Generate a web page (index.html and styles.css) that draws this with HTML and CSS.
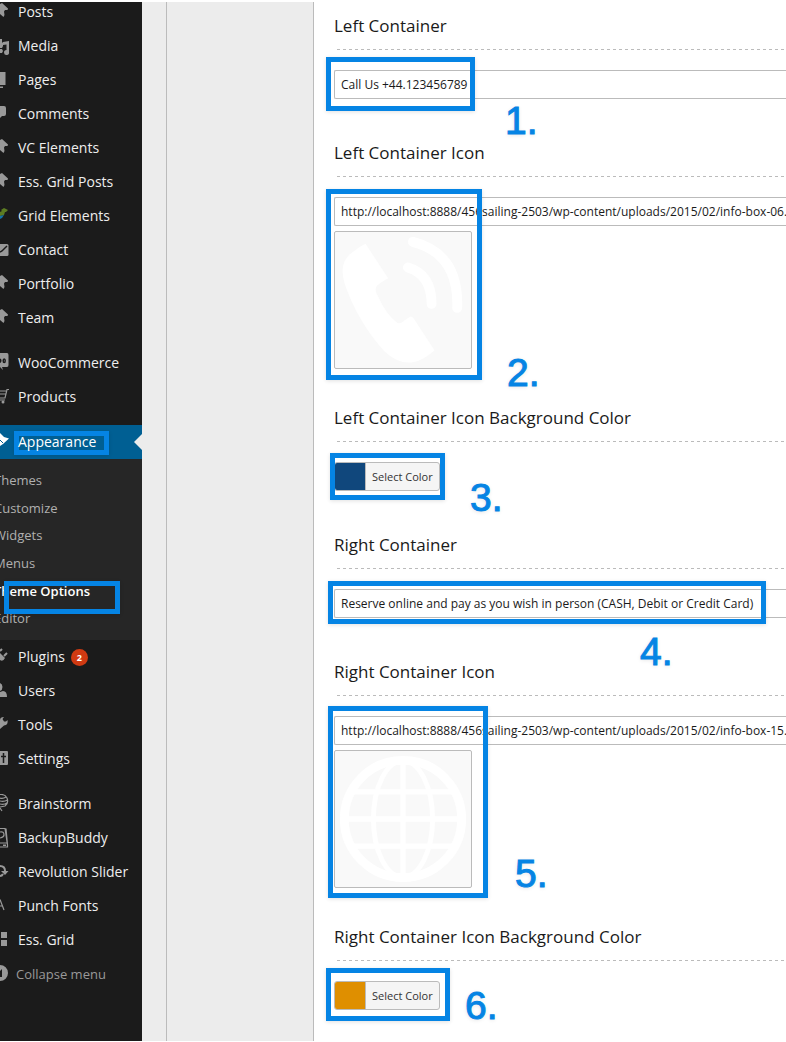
FILE: index.html
```html
<!DOCTYPE html>
<html lang="en">
<head>
<meta charset="utf-8">
<title>Theme Options</title>
<link rel="stylesheet" href="styles.css">
</head>
<body>
<div class="page">
  <nav class="sidebar" aria-label="Admin menu">
    <ul class="menu">
      <li><a href="#"><svg class="icon" viewBox="0 0 10 20"><path d="M0 2L2 1L8 6.500L7.500 8H5L4 9.500L4.500 13L3.500 15L0 12Z"/></svg>Posts</a></li>
      <li><a href="#"><svg class="icon" viewBox="0 0 10 20"><path d="M0 3H2V6L3 7V10L2 12H0ZM0 13H2L3 15L2 17H0ZM3 6L9 5V16A2.500 2.500 0 1 1 6.500 14V8.500L3 9Z"/></svg>Media</a></li>
      <li><a href="#"><svg class="icon" viewBox="0 0 10 20"><path d="M0 2H5.500V15H0ZM0 16.500H3V18H0Z"/></svg>Pages</a></li>
      <li><a href="#"><svg class="icon" viewBox="0 0 10 20"><path d="M0 2H4Q6 2 6 4V10Q6 12 4 12H2L0 14Z"/></svg>Comments</a></li>
      <li><a href="#"><svg class="icon" viewBox="0 0 10 20"><path d="M0 2L2 1L8 6.500L7.500 8H5L4 9.500L4.500 13L3.500 15L0 12Z"/></svg>VC Elements</a></li>
      <li><a href="#"><svg class="icon" viewBox="0 0 10 20"><path d="M0 2L2 1L8 6.500L7.500 8H5L4 9.500L4.500 13L3.500 15L0 12Z"/></svg>Ess. Grid Posts</a></li>
      <li><a href="#"><svg class="icon" viewBox="0 0 10 20"><path fill="#5d7c22" d="M1 4L4 2L8 4L6 6H5L4 9L0 10V6L2 5Z"/><path fill="#1474a8" d="M0 10L4 9L2 12L0 13Z"/></svg>Grid Elements</a></li>
      <li><a href="#"><svg class="icon" viewBox="0 0 10 20"><path d="M0 4H7Q8.500 4 8.500 5.500V14.500Q8.500 16 7 16H0Z"/><path class="cut" d="M0 12L2 11L7 6"/></svg>Contact</a></li>
      <li><a href="#"><svg class="icon" viewBox="0 0 10 20"><path d="M0 2L2 1L8 6.500L7.500 8H5L4 9.500L4.500 13L3.500 15L0 12Z"/></svg>Portfolio</a></li>
      <li><a href="#"><svg class="icon" viewBox="0 0 10 20"><path d="M0 2L2 1L8 6.500L7.500 8H5L4 9.500L4.500 13L3.500 15L0 12Z"/></svg>Team</a></li>
      <li class="group"><a href="#"><svg class="icon" viewBox="0 0 10 20"><path d="M0 0H7Q8.500 0 8.500 2V12Q8.500 14 7 14H2L3 17L0 14Z"/><path class="cut" d="M0 6Q1.500 7.500 0 9.500"/><ellipse class="cut" cx="4.200" cy="7.800" rx="1" ry="1.800"/></svg>WooCommerce</a></li>
      <li><a href="#"><svg class="icon" viewBox="0 0 10 20"><path class="line" d="M0 4H6M9 2.500H7L5 11H0M0 7H6M0 13H5"/><circle cx="3" cy="15" r="1.500"/></svg>Products</a></li>
      <li class="group current">
        <a href="#"><svg class="icon" viewBox="0 0 10 20"><path d="M0 1L4 5L9 6.500L3 12L0 14Z"/><path class="dent" d="M0 8L3 11"/></svg><span class="label">Appearance</span><span class="mark mark-appearance"></span></a>
        <ul class="submenu">
          <li><a href="#">Themes</a></li>
          <li><a href="#">Customize</a></li>
          <li><a href="#">Widgets</a></li>
          <li><a href="#">Menus</a></li>
          <li><a href="#" class="selected">Theme Options<span class="mark mark-options"></span></a></li>
          <li><a href="#">Editor</a></li>
        </ul>
      </li>
      <li><a href="#"><svg class="icon" viewBox="0 0 10 20"><path d="M0 6L5 11Q3 15 0 13Z"/><path class="thick" d="M0 4L2 2M4 9L7 6"/></svg>Plugins <span class="badge">2</span></a></li>
      <li><a href="#"><svg class="icon" viewBox="0 0 10 20"><path d="M0 2Q2.500 3 2.500 6Q2.500 9 0 10ZM0 11L3 10Q7 10 7 16H0Z"/></svg>Users</a></li>
      <li><a href="#"><svg class="icon" viewBox="0 0 10 20"><path d="M0 5Q0 2 4 2L2.500 4L4 6.500H6L7.500 5Q8.500 10 4 10.500L0 14Z"/></svg>Tools</a></li>
      <li><a href="#"><svg class="icon" viewBox="0 0 10 20"><path d="M0 2H7Q8 2 8 3V15Q8 16 7 16H0Z"/><path class="cut" d="M3.500 4V14M1 7.500H6"/></svg>Settings</a></li>
      <li class="group"><a href="#"><svg class="icon" viewBox="0 0 10 20"><path class="line" d="M0 .5Q5 0 7 4Q9 9 5 12L0 13M0 4Q3 5 6 3M0 7Q4 8 7.500 6M0 10Q4 11 7 9M0 14L2 17"/></svg>Brainstorm</a></li>
      <li><a href="#"><svg class="icon" viewBox="0 0 10 20"><path class="line" d="M0 .5H5L7.500 17V19H0M0 15H7M0 4Q4 3 4 7Q4 9 0 10M6 .5L7.500 17"/><path d="M3 16.500H6V18H3Z"/></svg>BackupBuddy</a></li>
      <li><a href="#"><svg class="icon" viewBox="0 0 10 20"><path class="thick" d="M0 4Q5 4 5 9M3 12Q2 14 0 14"/><path d="M1 9H8.500L5 13Z"/></svg>Revolution Slider</a></li>
      <li><a href="#"><svg class="icon" viewBox="0 0 10 20"><path class="line" d="M0 3.500L4 14M0 10H2"/></svg>Punch Fonts</a></li>
      <li><a href="#"><svg class="icon" viewBox="0 0 10 20"><path d="M1 2H7V8H1ZM1 10H7V16H1Z"/></svg>Ess. Grid</a></li>
      <li class="collapse"><a href="#"><svg class="icon" viewBox="0 0 10 20"><path d="M0 1A8 8 0 0 1 0 17V13L2 13V5L0 7Z"/></svg>Collapse menu</a></li>
    </ul>
  </nav>
  <div class="gutter"></div>
  <div class="tabs"></div>
  <main class="options">
    <section class="option">
      <h2><label for="left-text">Left Container</label></h2>
      <div class="field">
        <input class="text" id="left-text" type="text" value="Call Us +44.123456789">
        <span class="mark mark-1"></span><span class="step step-1">1.</span>
      </div>
    </section>
    <section class="option">
      <h2><label for="left-icon">Left Container Icon</label></h2>
      <div class="field">
        <input class="text" id="left-icon" type="text" value="http://localhost:8888/456sailing-2503/wp-content/uploads/2015/02/info-box-06.png">
        <div class="thumb">
          <svg viewBox="0 0 138 138" role="img" aria-label="Phone">
            <path fill="#fff" d="M31 12L54 47Q48 50 43 54Q39 58 44 66Q52 84 63 92Q66 94 70 90L76 86Q78 85 80 88L101 120Q90 130 80 132Q65 135 50 121Q23 91 10 53Q3 31 17 21Q24 15 31 12Z"/>
            <path class="wave" d="M74 36Q98 43 98 73M79 10Q126 22 124 77"/>
          </svg>
        </div>
        <span class="mark mark-2"></span><span class="step step-2">2.</span>
      </div>
    </section>
    <section class="option">
      <h2>Left Container Icon Background Color</h2>
      <div class="field">
        <button class="color" type="button"><span class="swatch swatch-blue"></span>Select Color</button>
        <span class="mark mark-3"></span><span class="step step-3">3.</span>
      </div>
    </section>
    <section class="option">
      <h2><label for="right-text">Right Container</label></h2>
      <div class="field">
        <input class="text" id="right-text" type="text" value="Reserve online and pay as you wish in person (CASH, Debit or Credit Card)">
        <span class="mark mark-4"></span><span class="step step-4">4.</span>
      </div>
    </section>
    <section class="option">
      <h2><label for="right-icon">Right Container Icon</label></h2>
      <div class="field">
        <input class="text" id="right-icon" type="text" value="http://localhost:8888/456sailing-2503/wp-content/uploads/2015/02/info-box-15.png">
        <div class="thumb">
          <svg viewBox="0 0 138 138" role="img" aria-label="Globe">
            <circle class="globe" cx="69" cy="69" r="59.500" stroke-width="9"/>
            <path class="globe" stroke-width="5.500" d="M69 8V130M8 69H130M16 41.500H122M16 96.500H122"/>
            <ellipse class="globe" cx="69" cy="69" rx="30" ry="59" stroke-width="5"/>
          </svg>
        </div>
        <span class="mark mark-5"></span><span class="step step-5">5.</span>
      </div>
    </section>
    <section class="option">
      <h2>Right Container Icon Background Color</h2>
      <div class="field">
        <button class="color" type="button"><span class="swatch swatch-orange"></span>Select Color</button>
        <span class="mark mark-6"></span><span class="step step-6">6.</span>
      </div>
    </section>
  </main>
</div>
</body>
</html>
```
FILE: styles.css
```css
* { box-sizing: border-box; }

body {
  margin: 0;
  background: #fff;
  font-family: "Open Sans", "Noto Sans", sans-serif;
  color: #1a1a1a;
}

.page {
  display: grid;
  grid-template-columns: 142px 24px 148px minmax(0, 1fr);
  min-height: 100vh;
  padding: 2px 0 1px;
  overflow: hidden;
}

ul { list-style: none; margin: 0; padding: 0; }
a { color: inherit; text-decoration: none; }

/* Admin menu */
.sidebar {
  background: #1b1b1b;
  color: #eee;
  font: 14px/34px "Open Sans", sans-serif;
  overflow: hidden;
}
.menu { margin-top: -7px; }
.menu > li > a {
  display: flex;
  align-items: center;
  gap: 8px;
  height: 34px;
  position: relative;
  white-space: nowrap;
}
.menu > .group { margin-top: 11px; }

.icon { width: 10px; height: 20px; flex: none; fill: #999; }
.icon .cut { fill: none; stroke: #1b1b1b; stroke-width: 1.5; }
.icon .line { fill: none; stroke: #999; stroke-width: 1.2; }
.icon .thick { fill: none; stroke: #999; stroke-width: 2; }
.icon .dent { fill: none; stroke: #005f93; stroke-width: 1; }

.current > a { background: #005f93; color: #fff; }
.current > a::after {
  content: "";
  position: absolute;
  right: 0;
  top: 9px;
  border: 8px solid transparent;
  border-left-width: 0;
  border-right-color: #ececec;
}
.current .icon { fill: #fff; }
.label { position: relative; z-index: 1; }

.submenu {
  display: grid;
  grid-auto-rows: 1fr;
  min-height: 181px;
  padding: 8px 0 7px;
  background: #262626;
  color: #b0b0b0;
  font-size: 13px;
  line-height: 27px;
}
.submenu a { display: block; position: relative; margin-left: -6px; }
.submenu .selected { color: #fff; font-weight: 600; }

.badge {
  width: 17px;
  height: 17px;
  margin-left: -2px;
  border-radius: 50%;
  background: #d03a12;
  color: #fff;
  font-size: 9px;
  font-weight: 700;
  line-height: 17px;
  text-align: center;
}
.menu > .collapse > a { gap: 6px; color: #999; font-size: 13px; }

/* Empty columns between the menu and the options */
.gutter { background: #ececec; }
.tabs {
  background: #ececec;
  border: solid #bbb;
  border-width: 0 1px;
}

/* Option list */
.options {
  display: flex;
  flex-direction: column;
  gap: 37px;
  padding: 12px 0 0 20px;
}
h2 {
  position: relative;
  margin: 0 0 21px;
  padding-bottom: 11px;
  font-size: 17px;
  font-weight: 400;
  line-height: 24px;
}
h2::after {
  content: "";
  position: absolute;
  left: 3px;
  right: 0;
  top: 35px;
  height: 1px;
  background: repeating-linear-gradient(90deg, #bbb 0 3px, transparent 3px 6px);
}
.field { position: relative; }
.text {
  display: block;
  width: 100%;
  height: 29px;
  margin-bottom: 5px;
  padding: 0 0 0 6px;
  border: 1px solid #bbb;
  border-right: 0;
  border-radius: 2px 0 0 2px;
  background: #fff;
  color: #1a1a1a;
  font: 12px "Open Sans", sans-serif;
}
.thumb {
  width: 138px;
  height: 138px;
  border: 1px solid #bbb;
  border-radius: 2px;
  background: #f9f9f9;
}
.thumb svg { display: block; width: 100%; height: 100%; }
.wave { fill: none; stroke: #fff; stroke-width: 10; stroke-linecap: round; }
.globe { fill: none; stroke: #fff; }

.color {
  display: flex;
  align-items: center;
  height: 29px;
  margin-bottom: 5px;
  padding: 0 6px 0 0;
  border: 1px solid #bbb;
  border-radius: 3px;
  background: #f5f5f5;
  color: #333;
  font: 11px "Open Sans", sans-serif;
  overflow: hidden;
}
.swatch {
  width: 31px;
  height: 27px;
  margin-right: 6px;
  border-right: 1px solid #bbb;
}
.swatch-blue { background: #10477c; }
.swatch-orange { background: #df8f00; }

/* Tutorial callouts laid over the page */
.mark {
  position: absolute;
  border: 5px solid #0584e4;
  box-shadow: 0 1px 4px rgba(0, 0, 0, .12);
  pointer-events: none;
}
.mark-appearance { left: 14px; top: 6px; width: 95px; height: 24px; }
.mark-options { left: 10px; top: 3px; width: 116px; height: 33px; z-index: 1; }
.mark-1 { left: -8px; top: -13px; width: 149px; height: 54px; }
.mark-2 { left: -8px; top: -8px; width: 156px; height: 191px; }
.mark-3 { left: -4px; top: -9px; width: 115px; height: 47px; }
.mark-4 { left: -6px; top: -8px; width: 438px; height: 43px; }
.mark-5 { left: -6px; top: -10px; width: 160px; height: 192px; }
.mark-6 { left: -8px; top: -13px; width: 124px; height: 53px; }

.step {
  position: absolute;
  color: #0584e4;
  font: 39px/40px "Liberation Sans", sans-serif;
  -webkit-text-stroke: 1px #0584e4;
  text-shadow: 0 1px 4px rgba(0, 0, 0, .12);
}
.step-1 { left: 171px; top: 31px; }
.step-2 { left: 173px; top: 156px; }
.step-3 { left: 136px; top: 16px; }
.step-4 { left: 306px; top: 43px; }
.step-5 { left: 181px; top: 138px; }
.step-6 { left: 131px; top: 5px; }
```
